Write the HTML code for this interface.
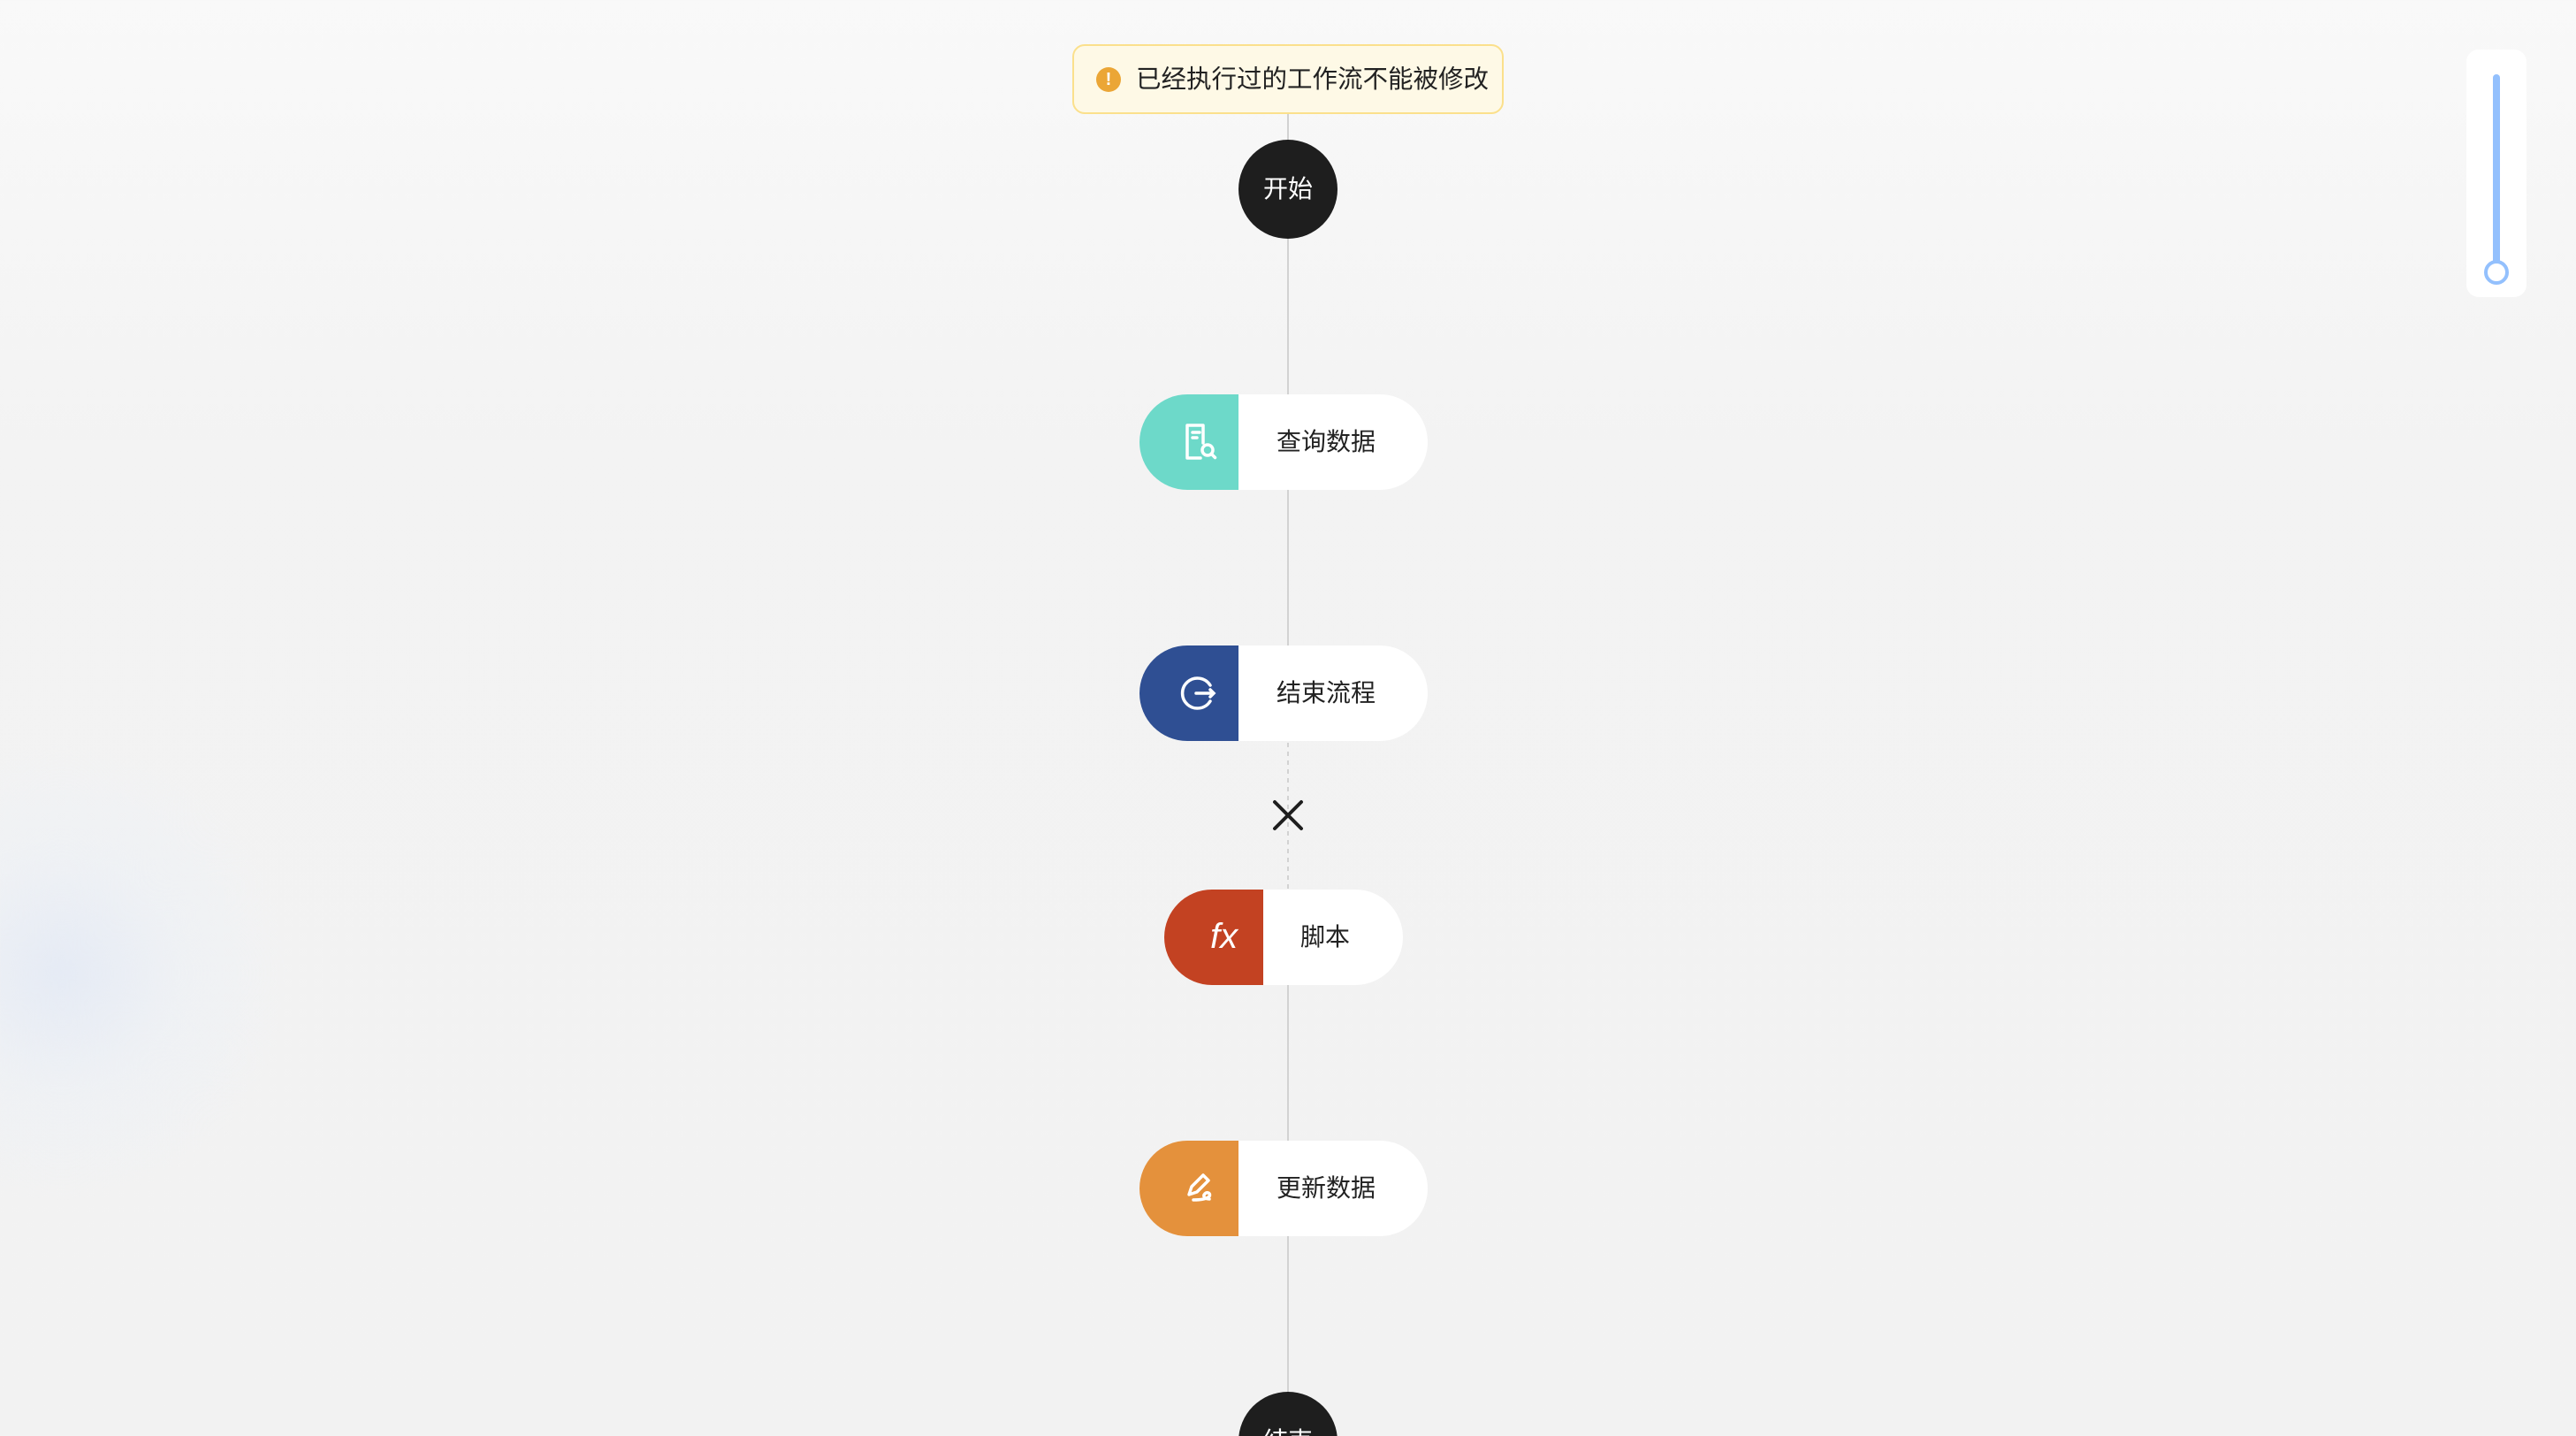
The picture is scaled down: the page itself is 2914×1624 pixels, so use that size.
<!DOCTYPE html>
<html style="overflow:hidden;width:2914px;height:1624px"><head><meta charset="utf-8"><style>
*{margin:0;padding:0;box-sizing:border-box}
body{width:2914px;height:1624px;overflow:hidden;position:relative;font-family:"Liberation Sans","Noto Sans CJK SC",sans-serif;
background:radial-gradient(circle at 70px 1100px,rgba(228,234,245,0.9) 0,rgba(236,240,246,0.6) 130px,rgba(243,243,243,0) 260px),linear-gradient(#f9f9f9 0,#f3f3f3 500px,#f2f2f2 1624px)}
.abs{position:absolute}
.line{position:absolute;left:1456px;width:2px;background:#d2d2d2}
.banner{left:1213px;top:50px;width:488px;height:79px;border:2px solid #fbe08c;background:#fef9e6;border-radius:14px}
.banner .ic{position:absolute;left:25px;top:24px;width:28px;height:28px;border-radius:50%;background:#eba636;color:#fff;font-size:20px;font-weight:bold;text-align:center;line-height:28px}
.banner .t{position:absolute;left:70px;top:18px;font-size:28.5px;color:#222;white-space:nowrap;line-height:40px}
.circ{width:112px;height:112px;border-radius:50%;background:#1e1e1e;color:#fff;font-size:28px;text-align:center;line-height:112px}
.node{height:108px;border-radius:54px;background:#fff;overflow:hidden}
.node .c{position:absolute;left:0;top:0;width:112px;height:108px}
.node .l{position:absolute;top:0;height:108px;line-height:108px;font-size:28px;color:#222;white-space:nowrap}
</style></head><body>
<div class="line" style="top:129px;height:709px"></div>
<div class="line" style="top:1006px;height:618px"></div>
<div class="abs" style="left:1456px;top:840px;width:2px;height:166px;background:repeating-linear-gradient(#d2d2d2 0 5px,transparent 5px 10px)"></div>
<div class="abs banner"><div class="ic">!</div><div class="t">已经执行过的工作流不能被修改</div></div>
<div class="abs circ" style="left:1401px;top:158px">开始</div>

<div class="abs node" style="left:1289px;top:446px;width:326px">
 <div class="c" style="background:#6dd9c9"><svg width="112" height="108" viewBox="0 0 112 108"><g transform="translate(6,0)" fill="none" stroke="#fff" stroke-width="3.5" stroke-linecap="round" stroke-linejoin="round"><path d="M66 55V35H48V72H63"/><path d="M54 43h8M54 49h5"/><circle cx="71" cy="63" r="6"/><path d="M75.5 67.5l4 4"/></g></svg></div>
 <div class="l" style="left:155px">查询数据</div></div>

<div class="abs node" style="left:1289px;top:730px;width:326px">
 <div class="c" style="background:#2f4f93"><svg width="112" height="108" viewBox="0 0 112 108"><g transform="translate(7,0)" fill="none" stroke="#fff" stroke-width="3.5" stroke-linecap="round"><path d="M73 45A17 17 0 1 0 73 63"/><path d="M57 54h19M73 50l4 4-4 4"/></g></svg></div>
 <div class="l" style="left:155px">结束流程</div></div>

<svg class="abs" style="left:1437px;top:902px" width="40" height="40"><path d="M5 5L35 35M35 5L5 35" stroke="#1e1e1e" stroke-width="4" stroke-linecap="round"/></svg>

<div class="abs node" style="left:1317px;top:1006px;width:270px">
 <div class="c" style="background:#c34222"><div style="position:absolute;left:52px;top:0;line-height:106px;color:#fff;font-size:40px;font-style:italic;font-family:'Liberation Sans',sans-serif">fx</div></div>
 <div class="l" style="left:154px">脚本</div></div>

<div class="abs node" style="left:1289px;top:1290px;width:326px">
 <div class="c" style="background:#e4913c"><svg width="112" height="108" viewBox="0 0 112 108"><g transform="translate(6,0)" fill="none" stroke="#fff" stroke-width="3.5" stroke-linecap="round" stroke-linejoin="round"><path d="M50 61l3-9 13-13 6 6-13 13-9 3z"/><path d="M55 67c8 0 15-1 18-4 2-3-2-6-5-3s0 6 5 6"/></g></svg></div>
 <div class="l" style="left:155px">更新数据</div></div>

<div class="abs circ" style="left:1401px;top:1574px">结束</div>

<div class="abs" style="left:2790px;top:56px;width:68px;height:280px;background:#fff;border-radius:14px"></div>
<div class="abs" style="left:2820px;top:84px;width:8px;height:216px;background:#93c0fd;border-radius:4px"></div>
<div class="abs" style="left:2810px;top:294px;width:28px;height:28px;border-radius:50%;border:4px solid #93c0fd;background:#fff"></div>
</body></html>
